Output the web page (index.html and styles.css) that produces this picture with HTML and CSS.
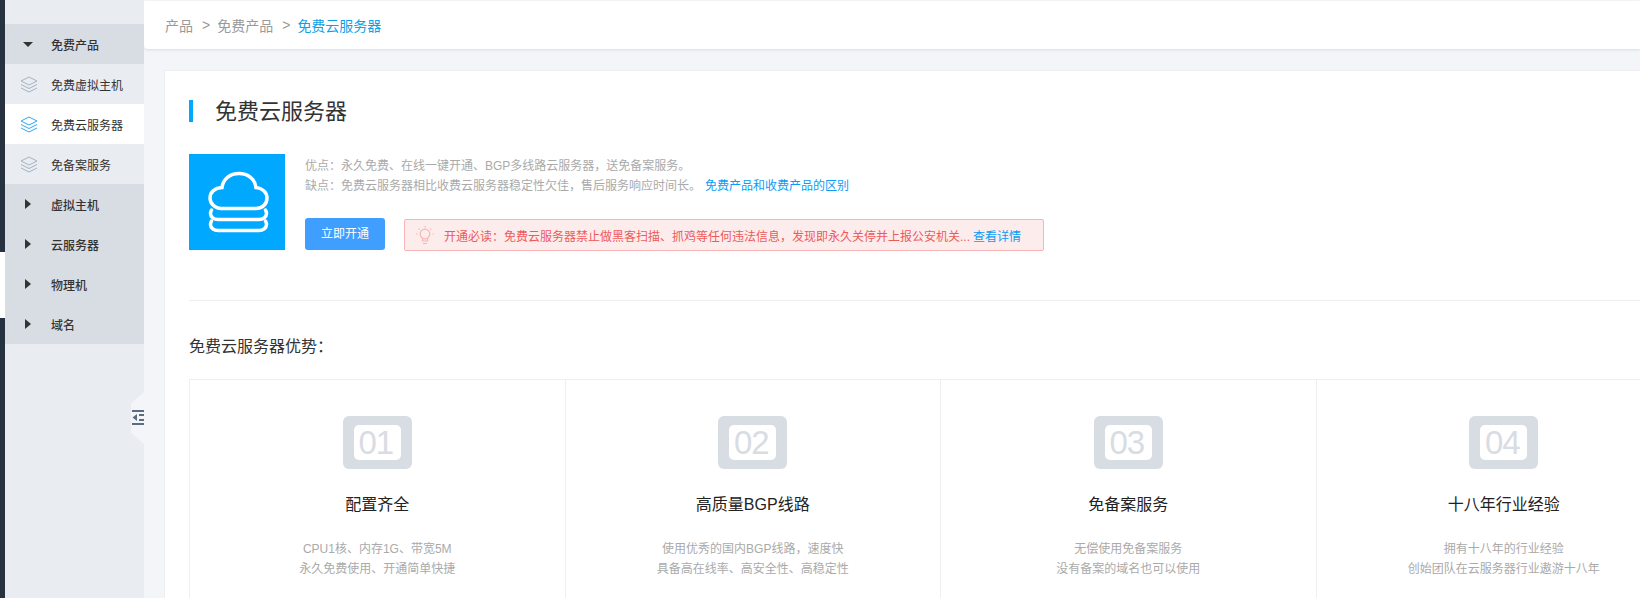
FILE: index.html
```html
<!DOCTYPE html>
<html lang="zh-CN">
<head>
<meta charset="utf-8">
<title>免费云服务器</title>
<link rel="stylesheet" href="styles.css">
</head>
<body>
<svg class="defs" width="0" height="0" aria-hidden="true">
  <symbol id="layers" viewBox="0 0 18 17">
    <path d="M9 1 L17 5 L9 9 L1 5 Z M1 8.5 L9 12.5 L17 8.5 M1 12 L9 16 L17 12" fill="none" stroke="currentColor" stroke-width="1"/>
  </symbol>
</svg>
<div class="page">
  <div class="strip">
    <div class="strip-dark strip-top"></div>
    <div class="strip-light"></div>
    <div class="strip-dark strip-bottom"></div>
  </div>
  <aside class="sidebar">
    <div class="nav-group"><i class="tri tri-down"></i><span>免费产品</span></div>
    <div class="nav-item"><svg class="layer-icon"><use href="#layers"/></svg><span>免费虚拟主机</span></div>
    <div class="nav-item active"><svg class="layer-icon"><use href="#layers"/></svg><span>免费云服务器</span></div>
    <div class="nav-item"><svg class="layer-icon"><use href="#layers"/></svg><span>免备案服务</span></div>
    <div class="nav-group"><i class="tri tri-right"></i><span>虚拟主机</span></div>
    <div class="nav-group"><i class="tri tri-right"></i><span>云服务器</span></div>
    <div class="nav-group"><i class="tri tri-right"></i><span>物理机</span></div>
    <div class="nav-group"><i class="tri tri-right"></i><span>域名</span></div>
    <div class="collapse">
      <svg width="13" height="16" viewBox="0 0 13 16">
        <rect x="1" y="0" width="12" height="2" fill="#5b6d85"/>
        <rect x="1" y="13" width="12" height="2" fill="#5b6d85"/>
        <path d="M6 4 V11 L1.500 7.500 Z" fill="#5b6d85"/>
        <rect x="8" y="4" width="5" height="2" fill="#5b6d85"/>
        <rect x="8" y="9" width="5" height="2" fill="#5b6d85"/>
      </svg>
    </div>
  </aside>
  <main class="main">
    <header class="crumbs">
      <span>产品</span><span class="sep">&gt;</span><span>免费产品</span><span class="sep">&gt;</span><span class="current">免费云服务器</span>
    </header>
    <section class="card">
      <h1 class="title"><span class="title-text">免费云服务器</span></h1>
      <div class="media">
        <div class="product-icon">
          <svg width="96" height="96" viewBox="0 0 96 96" fill="none" stroke="#fff" stroke-width="3.500" stroke-linecap="round">
            <path d="M32 54.500 H67 C74 54.500 78 49.500 78 44 C78 38 73 34 67 33.500 C66 25 59 19.500 50 19.500 C41 19.500 34 25 33 33.500 C26 34 21 38 21 44 C21 49.500 26 54.500 32 54.500 Z"/>
            <path d="M22.500 56 C22 57 21.500 58 21.500 59.500 C21.500 63 25 65.500 29 65.500 H70 C74 65.500 77.500 63 77.500 59.500 C77.500 58 77 57 76.500 56"/>
            <path d="M22.500 67 C22 68 21.500 69 21.500 70.500 C21.500 74 25 76.500 29 76.500 H70 C74 76.500 77.500 74 77.500 70.500 C77.500 69 77 68 76.500 67"/>
          </svg>
        </div>
        <div class="media-body">
          <p class="desc">优点&#xFF1A;永久免费、在线一键开通、BGP多线路云服务器&#xFF0C;送免备案服务。</p>
          <p class="desc">缺点&#xFF1A;免费云服务器相比收费云服务器稳定性欠佳&#xFF0C;售后服务响应时间长。<a class="link diff">免费产品和收费产品的区别</a></p>
          <div class="actions">
            <a class="btn">立即开通</a>
            <div class="notice">
              <svg class="bulb" width="20" height="21" viewBox="0 0 20 21" fill="none" stroke="#f8b4b6" stroke-width="1.200">
                <circle cx="10" cy="9" r="4.800"/>
                <path d="M7.500 13.500 V16 H12.500 V13.500 M8 18.500 H12 M10 1 V2.500 M3.600 3.600 L4.700 4.700 M16.400 3.600 L15.300 4.700 M1 9 H2.500 M17.500 9 H19"/>
              </svg>
              <span>开通必读&#xFF1A;免费云服务器禁止做黑客扫描、抓鸡等任何违法信息&#xFF0C;发现即永久关停并上报公安机关...</span>
              <a class="link">查看详情</a>
            </div>
          </div>
        </div>
      </div>
      <hr class="rule">
      <h2 class="subtitle">免费云服务器优势&#xFF1A;</h2>
      <div class="features">
        <article class="feature">
          <div class="num"><span>01</span></div>
          <h3>配置齐全</h3>
          <p>CPU1核、内存1G、带宽5M</p>
          <p>永久免费使用、开通简单快捷</p>
        </article>
        <article class="feature">
          <div class="num"><span>02</span></div>
          <h3>高质量BGP线路</h3>
          <p>使用优秀的国内BGP线路&#xFF0C;速度快</p>
          <p>具备高在线率、高安全性、高稳定性</p>
        </article>
        <article class="feature">
          <div class="num"><span>03</span></div>
          <h3>免备案服务</h3>
          <p>无偿使用免备案服务</p>
          <p>没有备案的域名也可以使用</p>
        </article>
        <article class="feature">
          <div class="num"><span>04</span></div>
          <h3>十八年行业经验</h3>
          <p>拥有十八年的行业经验</p>
          <p>创始团队在云服务器行业遨游十八年</p>
        </article>
      </div>
    </section>
  </main>
</div>
</body>
</html>
```
FILE: styles.css
```css
* { box-sizing: border-box; }
html, body { margin: 0; height: 598px; overflow: hidden; background: #fff; }
body { font-family: "Liberation Sans", "Noto Sans CJK SC", sans-serif; font-size: 12px; color: #333; }
.defs { position: absolute; }
.page { display: flex; height: 598px; width: 1640px; overflow: hidden; }

.strip { flex: 0 0 5px; display: flex; flex-direction: column; }
.strip-dark { background: #263240; }
.strip-top { height: 252px; }
.strip-light { height: 66px; background: #fff; }
.strip-bottom { flex: 1; }

.sidebar { flex: 0 0 139px; position: relative; background: #e9ecf1; padding-top: 24px; }
.nav-group, .nav-item { height: 40px; display: flex; align-items: center; padding-left: 46px; position: relative; font-size: 12px; color: #333; }
.nav-group { background: #d8dce3; font-weight: 500; }
.nav-item.active { background: #fff; }
.layer-icon { position: absolute; left: 15px; top: 12px; width: 18px; height: 17px; color: #a5b2c5; }
.active .layer-icon { color: #2fa8f2; }
.tri { position: absolute; width: 0; height: 0; border-style: solid; }
.tri-down { left: 18px; top: 18px; border-width: 5px 5px 0; border-color: #333 transparent transparent; }
.tri-right { left: 20px; top: 15px; border-width: 5px 0 5px 6px; border-color: transparent transparent transparent #333; }
.collapse { position: absolute; right: 0; top: 392px; width: 13px; height: 52px; background: #f4f5f8; clip-path: polygon(100% 0, 100% 100%, 0 78%, 0 22%); display: flex; align-items: center; justify-content: flex-end; }

.main { flex: 1; min-width: 0; background: #f4f5f9; padding-top: 1px; }
.crumbs { height: 48px; background: #fff; border-bottom-left-radius: 4px; box-shadow: 0 1px 3px rgba(0, 0, 0, .1); display: flex; align-items: center; padding-left: 21px; font-size: 14px; color: #999; }
.sep { margin: 0 7px 0 9px; }
.current { color: #0fa0e6; }

.card { margin: 21px 0 0 20px; width: 1560px; background: #fff; border: 1px solid #eeeff2; padding: 29px 24px 0; }
.title { margin: 0; height: 22px; border-left: 4px solid #00a8ff; padding-left: 22px; font-size: 22px; line-height: 24px; font-weight: 400; color: #333; }
.media { display: flex; margin-top: 32px; height: 96px; }
.product-icon { flex: 0 0 96px; height: 96px; background: #00a8ff; }
.media-body { margin-left: 20px; display: flex; flex-direction: column; }
.desc { margin: 0; font-size: 12px; line-height: 20px; color: #aaa; }
.desc:first-child { margin-top: 2px; }
.link { color: #0a9cf5; }
.diff { margin-left: 4px; }
.actions { display: flex; margin-top: 22px; align-items: flex-start; }
.btn { width: 80px; height: 32px; line-height: 32px; text-align: center; background: #409eff; color: #fff; border-radius: 3px; font-size: 12px; }
.notice { width: 640px; height: 32px; margin: 1px 0 0 19px; background: #fdecec; border: 1px solid #f7b5b8; border-radius: 2px; display: flex; align-items: center; padding-left: 10px; color: #ee5a5a; font-size: 12px; white-space: nowrap; }
.bulb { margin-right: 9px; flex: none; }
.notice .link { margin-left: 3px; }

.rule { margin: 50px 0 0; border: 0; border-top: 1px solid #eeeff2; }
.subtitle { margin: 34px 0 0; font-size: 16px; line-height: 24px; font-weight: 400; color: #333; }
.features { display: grid; grid-template-columns: repeat(4, 375.500px); margin-top: 20px; border-top: 1px solid #eeeff2; border-left: 1px solid #eeeff2; }
.feature { height: 240px; border-right: 1px solid #eeeff2; padding-top: 36px; text-align: center; }
.num { width: 69px; height: 53px; margin: 0 auto; background: #d8dce3; border-radius: 6px; padding: 9px 11px; }
.num span { display: block; height: 35px; padding-right: 3px; background: #fff; border-radius: 5px; font-size: 33px; line-height: 35px; color: #d8dce3; letter-spacing: -1px; }
.feature h3 { margin: 24px 0 0; font-size: 16px; line-height: 24px; font-weight: 400; color: #222; }
.feature p { margin: 0; font-size: 12px; line-height: 20px; color: #aaa; }
.feature h3 + p { margin-top: 22px; }
```
